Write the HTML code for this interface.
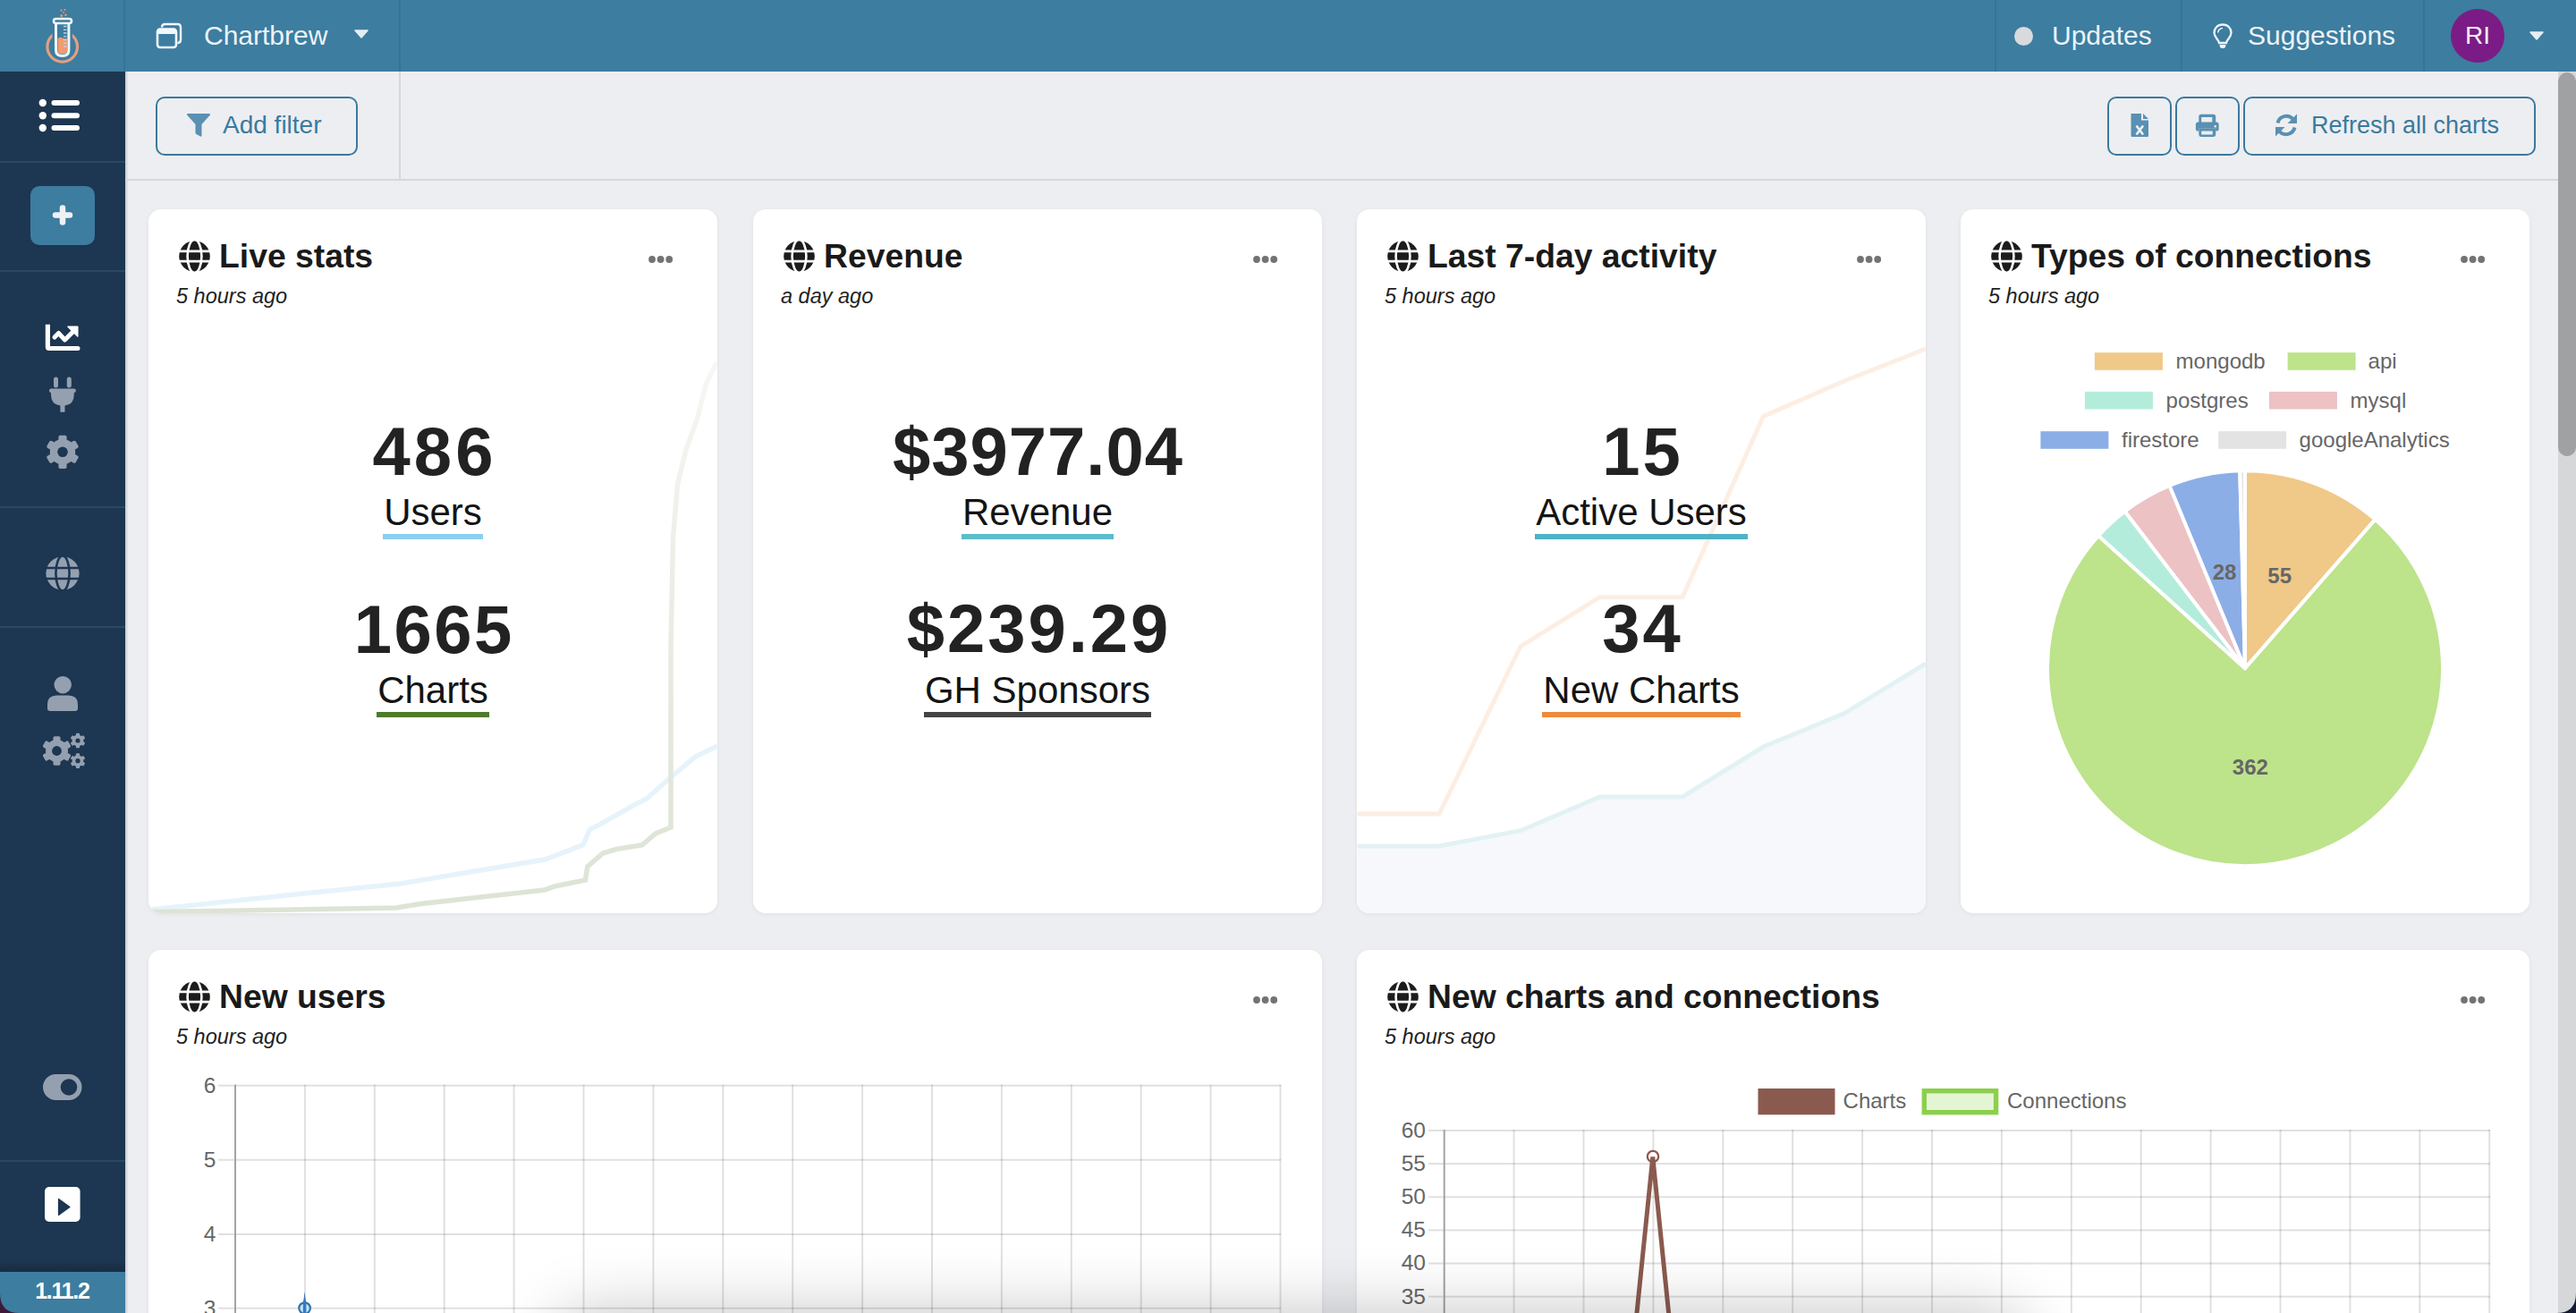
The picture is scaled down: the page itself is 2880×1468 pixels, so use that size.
<!DOCTYPE html>
<html><head><meta charset="utf-8">
<style>
*{margin:0;padding:0;box-sizing:border-box}
html,body{width:2880px;height:1468px;overflow:hidden;background:#edeef1;font-family:"Liberation Sans",sans-serif;color:#1e1e1e}
.a{position:absolute}
.t{position:absolute;white-space:nowrap;line-height:1}
#top{left:0;top:0;width:2880px;height:80px;background:#3c7da0}
.vd{position:absolute;top:0;width:2px;height:80px;background:#36739a}
#side{left:0;top:80px;width:140px;height:1388px;background:#1d3651}
.hd{position:absolute;left:0;width:140px;height:2px;background:#2a4864}
.btn{position:absolute;border:2px solid #3a7a9e;border-radius:10px}
.card{position:absolute;background:#fff;border-radius:14px;box-shadow:0 1px 5px rgba(0,0,0,0.06);overflow:hidden}
.title{font-weight:bold;font-size:36px;color:#1a1a1a}
.sub{font-style:italic;font-size:23.5px;color:#222}
.big{font-weight:bold;font-size:76px;color:#222;text-align:center}
.lbl{font-size:42px;color:#111;text-align:center}
.ul{position:absolute;height:6px}
.lg{font-size:24px;color:#666}
</style></head><body>
<!-- TOP BAR -->
<div id="top" class="a">
  <div class="vd" style="left:138px"></div>
  <div class="vd" style="left:446px"></div>
  <div class="vd" style="left:2230px"></div>
  <div class="vd" style="left:2438px"></div>
  <div class="vd" style="left:2709px"></div>
</div>

<!-- LOGO -->
<svg class="a" style="left:0;top:0" width="140" height="80" viewBox="0 0 140 80">
  <circle cx="69.7" cy="52.3" r="16.8" fill="none" stroke="#e29f80" stroke-width="3.2"/>
  <path d="M62.5 25.5 L62.5 56 Q62.5 62.5 69.7 62.5 Q76.9 62.5 76.9 56 L76.9 25.5" fill="#3c7da0" stroke="#3c7da0" stroke-width="8"/>
  <path d="M64.5 43 Q67 41 70 42.5 Q73 44 75 43 L75 56 Q75 60.5 69.7 60.5 Q64.5 60.5 64.5 56 Z" fill="#ee9c72"/>
  <path d="M62.5 25.5 L62.5 56 Q62.5 62.5 69.7 62.5 Q76.9 62.5 76.9 56 L76.9 25.5" fill="none" stroke="#eef6fb" stroke-width="3"/>
  <rect x="60" y="21" width="20" height="5" rx="2.5" fill="#3c7da0" stroke="#eef6fb" stroke-width="2.6"/>
  <path d="M71 29.5 h3.5 M71 33.3 h3.5 M71 37 h3.5 M71 40.8 h3.5 M71 44.5 h3.5 M71 48.3 h3.5 M71 52 h3.5" stroke="#b8d6e6" stroke-width="1.3"/>
  <circle cx="68.8" cy="17.5" r="1.5" fill="#e59a73"/><circle cx="73.5" cy="16.7" r="1.3" fill="#e59a73"/>
  <circle cx="68.5" cy="11.7" r="1.1" fill="#e59a73"/><circle cx="72.5" cy="11" r="1.1" fill="#e59a73"/><circle cx="71" cy="14" r="0.9" fill="#e59a73"/>
</svg>
<!-- window icon -->
<svg class="a" style="left:172px;top:23px" width="34" height="34" viewBox="0 0 34 34">
  <path d="M9 7.5 Q9 4 12.5 4 H26.5 Q30 4 30 7.5 V21.5 Q30 25 26.5 25" fill="none" stroke="#f3f8fb" stroke-width="2.4"/>
  <rect x="4" y="9.5" width="21" height="20.5" rx="3" fill="#3c7da0" stroke="#f3f8fb" stroke-width="2.6"/>
  <rect x="4" y="9.5" width="21" height="5.5" rx="2" fill="#f3f8fb"/>
</svg>
<div class="t" style="left:228px;top:24.5px;font-size:30px;color:#ecf3f8">Chartbrew</div>
<svg class="a" style="left:396px;top:33px" width="16" height="10" viewBox="0 0 16 10"><path d="M1 1 H15 L8 9 Z" fill="#e6eef3" stroke="#e6eef3" stroke-width="1.5" stroke-linejoin="round"/></svg>
<div class="a" style="left:2252px;top:29.5px;width:21px;height:21px;border-radius:50%;background:#d9dadb"></div>
<div class="t" style="left:2294px;top:24.6px;font-size:30px;color:#ecf3f8">Updates</div>
<svg class="a" style="left:2472px;top:25px" width="26" height="30" viewBox="0 0 26 30">
  <path d="M13 2.5 C7 2.5 3.5 7 3.5 11.5 C3.5 15 5.5 17 7 19 C8 20.5 8.7 21.5 9 23 H17 C17.3 21.5 18 20.5 19 19 C20.5 17 22.5 15 22.5 11.5 C22.5 7 19 2.5 13 2.5 Z" fill="none" stroke="#eef4f8" stroke-width="2.3"/>
  <path d="M9.5 25 H16.5 L16 27.5 Q15.5 29 13 29 Q10.5 29 10 27.5 Z" fill="#eef4f8"/>
  <path d="M13 6.5 C10 6.5 7.8 9 7.8 11.5" fill="none" stroke="#eef4f8" stroke-width="1.6"/>
</svg>
<div class="t" style="left:2513px;top:24.6px;font-size:30px;color:#ecf3f8">Suggestions</div>
<div class="a" style="left:2740px;top:10px;width:60px;height:60px;border-radius:50%;background:#7b1c86"></div>
<div class="t" style="left:2740px;top:26px;width:60px;text-align:center;font-size:28px;color:#f6eef8">RI</div>
<svg class="a" style="left:2828px;top:35px" width="16" height="10" viewBox="0 0 16 10"><path d="M1 1 H15 L8 9 Z" fill="#e6eef3" stroke="#e6eef3" stroke-width="1.5" stroke-linejoin="round"/></svg>

<!-- SIDEBAR -->
<div id="side" class="a">
  <div class="hd" style="top:100px"></div>
  <div class="hd" style="top:222px"></div>
  <div class="hd" style="top:486px"></div>
  <div class="hd" style="top:620px"></div>
  <div class="hd" style="top:1217px"></div>
</div>

<svg class="a" style="left:0;top:80px" width="140" height="1388" viewBox="0 80 140 1388">
  <g fill="#ffffff">
    <circle cx="47.8" cy="115" r="4.2"/><circle cx="47.8" cy="129.2" r="4.2"/><circle cx="47.8" cy="143" r="4.2"/>
    <rect x="57.5" y="112" width="31.5" height="6" rx="3"/><rect x="57.5" y="126.2" width="31.5" height="6" rx="3"/><rect x="57.5" y="140" width="31.5" height="6" rx="3"/>
  </g>
  <rect x="34" y="208" width="72" height="66" rx="10" fill="#3c7da0"/>
  <path d="M70 232.4 V248.4 M62 240.4 H78" stroke="#eef2f6" stroke-width="6.5" stroke-linecap="round"/>
  <!-- chart line -->
  <path d="M50.8 362.8 H56 V387 H87 Q89.5 387 89.5 389.5 Q89.5 392 87 392 H55 Q50.8 392 50.8 388 Z" fill="#fff"/>
  <path d="M61 377 L65.5 372.5 L72.5 380 L82 370.5" fill="none" stroke="#fff" stroke-width="5" stroke-linecap="round" stroke-linejoin="round"/>
  <path d="M76 365.3 H86.8 V376 Z" fill="#fff" stroke="#fff" stroke-width="1.5" stroke-linejoin="round"/>
  <g fill="#94a0af">
    <!-- plug -->
    <rect x="60" y="421.5" width="5" height="12" rx="2.5"/><rect x="74.8" y="421.5" width="5" height="12" rx="2.5"/>
    <rect x="55" y="434.5" width="29.8" height="4.5" rx="2"/>
    <path d="M57 438 H82.8 V441 Q82.8 452.5 72.5 453.5 V460.7 H67.4 V453.5 Q57 452.5 57 441 Z"/>
    <!-- gear -->
    <g transform="translate(70 505.3)"><circle r="14.2"/><rect x="-4.6" y="-18.6" width="9.2" height="10" rx="2" transform="rotate(0)"/><rect x="-4.6" y="-18.6" width="9.2" height="10" rx="2" transform="rotate(60)"/><rect x="-4.6" y="-18.6" width="9.2" height="10" rx="2" transform="rotate(120)"/><rect x="-4.6" y="-18.6" width="9.2" height="10" rx="2" transform="rotate(180)"/><rect x="-4.6" y="-18.6" width="9.2" height="10" rx="2" transform="rotate(240)"/><rect x="-4.6" y="-18.6" width="9.2" height="10" rx="2" transform="rotate(300)"/></g>
  </g>
  <circle cx="70" cy="505.3" r="5.8" fill="#1d3651"/>
  <!-- globe -->
  <g transform="translate(70 641)">
    <circle r="18.6" fill="#94a0af"/>
    <g stroke="#1d3651" stroke-width="2.6" fill="none">
      <ellipse rx="7.6" ry="19.5"/>
      <path d="M-20 -6 H20 M-20 6 H20"/>
    </g>
  </g>
  <g fill="#94a0af">
    <!-- user -->
    <circle cx="70.2" cy="765.7" r="9.7"/>
    <path d="M53 792 V788 Q53 777.6 64 777.6 H76 Q87 777.6 87 788 V792 Q87 795 84 795 H56 Q53 795 53 792 Z"/>
  </g>
  <!-- gears -->
  <g fill="#94a0af">
    <g transform="translate(63.5 839.5) scale(0.88)"><circle r="14.2"/><rect x="-4.6" y="-18.6" width="9.2" height="10" rx="2" transform="rotate(0)"/><rect x="-4.6" y="-18.6" width="9.2" height="10" rx="2" transform="rotate(60)"/><rect x="-4.6" y="-18.6" width="9.2" height="10" rx="2" transform="rotate(120)"/><rect x="-4.6" y="-18.6" width="9.2" height="10" rx="2" transform="rotate(180)"/><rect x="-4.6" y="-18.6" width="9.2" height="10" rx="2" transform="rotate(240)"/><rect x="-4.6" y="-18.6" width="9.2" height="10" rx="2" transform="rotate(300)"/></g>
    <g transform="translate(87 828) scale(0.45)"><circle r="14.2"/><rect x="-4.6" y="-18.6" width="9.2" height="10" rx="2" transform="rotate(0)"/><rect x="-4.6" y="-18.6" width="9.2" height="10" rx="2" transform="rotate(60)"/><rect x="-4.6" y="-18.6" width="9.2" height="10" rx="2" transform="rotate(120)"/><rect x="-4.6" y="-18.6" width="9.2" height="10" rx="2" transform="rotate(180)"/><rect x="-4.6" y="-18.6" width="9.2" height="10" rx="2" transform="rotate(240)"/><rect x="-4.6" y="-18.6" width="9.2" height="10" rx="2" transform="rotate(300)"/></g>
    <g transform="translate(87 850.7) scale(0.45)"><circle r="14.2"/><rect x="-4.6" y="-18.6" width="9.2" height="10" rx="2" transform="rotate(0)"/><rect x="-4.6" y="-18.6" width="9.2" height="10" rx="2" transform="rotate(60)"/><rect x="-4.6" y="-18.6" width="9.2" height="10" rx="2" transform="rotate(120)"/><rect x="-4.6" y="-18.6" width="9.2" height="10" rx="2" transform="rotate(180)"/><rect x="-4.6" y="-18.6" width="9.2" height="10" rx="2" transform="rotate(240)"/><rect x="-4.6" y="-18.6" width="9.2" height="10" rx="2" transform="rotate(300)"/></g>
  </g>
  <circle cx="63.5" cy="839.5" r="5.4" fill="#1d3651"/>
  <circle cx="87" cy="828" r="2.6" fill="#1d3651"/>
  <circle cx="87" cy="850.7" r="2.6" fill="#1d3651"/>
  <!-- toggle -->
  <rect x="48" y="1201" width="43.5" height="29" rx="14.5" fill="#94a0af"/>
  <circle cx="77" cy="1215.5" r="9.3" fill="#1d3651"/>
  <!-- play square -->
  <rect x="50" y="1327" width="39.6" height="39" rx="5" fill="#fff"/>
  <path d="M65.5 1340.5 L78 1349.5 L65.5 1358.5 Z" fill="#1d3651" stroke="#1d3651" stroke-width="1.2" stroke-linejoin="round"/>
</svg>
<div class="a" style="left:0;top:1408px;width:140px;height:14px;background:linear-gradient(rgba(0,0,0,0),rgba(0,0,0,0.18))"></div>
<div class="a" style="left:140px;top:80px;width:3px;height:1388px;background:linear-gradient(90deg,#c9ccd1,#e4e6ea)"></div>
<div class="a" style="left:0;top:1422px;width:140px;height:46px;background:#3c7da0"></div>
<div class="t" style="left:0;top:1431px;width:140px;text-align:center;color:#fff;font-weight:bold;font-size:25px;letter-spacing:-1.3px;text-indent:-1.3px">1.11.2</div>

<!-- FILTER BAR -->
<div class="a" style="left:446px;top:80px;width:2px;height:121px;background:#d6d7db"></div>
<div class="a" style="left:140px;top:200px;width:2720px;height:2px;background:#d6d7db"></div>
<div class="btn" style="left:174px;top:108px;width:226px;height:66px"></div>
<div class="t" style="left:249px;top:126.3px;font-size:28px;color:#3a7a9e">Add filter</div>
<div class="btn" style="left:2356px;top:108px;width:72px;height:66px"></div>
<div class="btn" style="left:2432px;top:108px;width:72px;height:66px"></div>
<div class="btn" style="left:2508px;top:108px;width:327px;height:66px"></div>
<div class="t" style="left:2584px;top:127px;font-size:27px;color:#3a7a9e">Refresh all charts</div>


<svg class="a" style="left:206px;top:125px" width="32" height="30" viewBox="0 0 32 30">
  <path d="M3 3.5 Q2.5 2 4 2 H28 Q29.5 2 29 3.5 L19.5 14 V26.5 Q19.5 28 18 27.5 L13.5 25 Q12.5 24.5 12.5 23 V14 Z" fill="#5a90b2"/>
</svg>
<svg class="a" style="left:2380px;top:125px" width="24" height="30" viewBox="0 0 24 30">
  <path d="M2.5 2 H14 V9.5 H22 V27 Q22 28 21 28 H3.5 Q2.5 28 2.5 27 Z" fill="#5a90b2"/>
  <path d="M16 2 L22 8 H16 Z" fill="#5a90b2"/>
  <path d="M8.5 15.5 L16 25.5 M16 15.5 L8.5 25.5" stroke="#eef0f3" stroke-width="2.6"/>
</svg>
<svg class="a" style="left:2453px;top:125px" width="30" height="30" viewBox="0 0 30 30">
  <path d="M5.3 13 V5.5 Q5.3 2.7 8 2.7 H21.5 Q24.2 2.7 24.2 5.5 V13 H20.3 V6 H8.2 V13 Z" fill="#5a90b2"/>
  <path d="M4.5 11.4 H25 Q27.6 11.4 27.6 14 V19 Q27.6 21.6 25 21.6 H24.2 V18.7 H5.3 V21.6 H4.5 Q1.9 21.6 1.9 19 V14 Q1.9 11.4 4.5 11.4 Z" fill="#5a90b2"/>
  <path d="M5.3 18.7 H24.2 V25.5 Q24.2 27.9 21.8 27.9 H7.7 Q5.3 27.9 5.3 25.5 Z M8.2 21.6 V25.5 H20.7 V21.6 Z" fill="#5a90b2" fill-rule="evenodd"/>
  <circle cx="23.7" cy="16.3" r="1.2" fill="#eef0f3"/>
</svg>
<svg class="a" style="left:2541px;top:125px" width="30" height="30" viewBox="0 0 30 30">
  <path d="M5.5 12.5 A10 10 0 0 1 22.5 8" fill="none" stroke="#5a90b2" stroke-width="4"/>
  <path d="M27 2.5 V13 H16.5 Z" fill="#5a90b2"/>
  <path d="M24.5 17.5 A10 10 0 0 1 7.5 22" fill="none" stroke="#5a90b2" stroke-width="4"/>
  <path d="M3 27.5 V17 H13.5 Z" fill="#5a90b2"/>
</svg>

<!-- SCROLLBAR -->
<div class="a" style="left:2860px;top:80px;width:20px;height:1388px;background:#d6d7d9"></div>
<div class="a" style="left:2860px;top:81px;width:20px;height:429px;background:#a0a1a3;border-radius:10px"></div>

<!-- CARDS -->
<div class="card" style="left:166px;top:234px;width:636px;height:787px"></div>
<div class="card" style="left:842px;top:234px;width:636px;height:787px"></div>
<div class="card" style="left:1517px;top:234px;width:636px;height:787px"></div>
<div class="card" style="left:2192px;top:234px;width:636px;height:787px"></div>
<div class="card" style="left:166px;top:1062px;width:1312px;height:500px"></div>
<div class="card" style="left:1517px;top:1062px;width:1311px;height:500px"></div>
<!-- CARDCONTENT -->
<svg class="a" style="left:166px;top:234px;clip-path:inset(0 round 14px)" width="636" height="787" viewBox="166 234 636 787">
<defs><linearGradient id="gfade" x1="0" y1="1021" x2="0" y2="400" gradientUnits="userSpaceOnUse"><stop offset="0" stop-color="#dde4d5"/><stop offset="0.16" stop-color="#dfe6d8"/><stop offset="0.5" stop-color="#e8ece3"/><stop offset="1" stop-color="#f7f7f5"/></linearGradient></defs>
<polyline points="169,1017 339.7,999 447.5,988 609,961 620,957 652,944.6 659.3,927.4 674,920 708.4,900.4 723,893 747.6,871 777,846.4 802,834" fill="none" stroke="#e6f3fb" stroke-width="5.5"/>
<polyline points="169,1019.6 443,1015 470,1010.6 609,995 620,991 654.4,984 656.8,969 674,954 688.7,949.5 718,944.6 733,932 750,925 750,723.6 752.5,601 757.5,542 767,502.7 779.5,468.4 789.4,429 801.6,404.5" fill="none" stroke="url(#gfade)" stroke-width="5.5"/>
</svg>
<svg class="a" style="left:1517px;top:234px;clip-path:inset(0 round 14px)" width="636" height="787" viewBox="1517 234 636 787">
<polygon points="1517.5,946 1609,946 1700,928.7 1788.5,891 1881,891 1971.4,835 2062,797.6 2153,742 2153,1021 1517.5,1021" fill="#f6f8fc"/>
<polyline points="1517.5,910 1609,910 1700,722.7 1788.5,667.7 1881,667.7 1971.4,465.4 2062,426 2153,390" fill="none" stroke="#fdeee3" stroke-width="5"/>
<polyline points="1517.5,946 1609,946 1700,928.7 1788.5,891 1881,891 1971.4,835 2062,797.6 2153,742" fill="none" stroke="#e2f2f4" stroke-width="5"/>
</svg>
<svg class="a" style="left:200px;top:269px" width="35" height="35" viewBox="-17.5 -17.5 35 35"><circle r="17.3" fill="#1c1c1c"/><g stroke="#fff" stroke-width="2.6" fill="none"><ellipse rx="7.9" ry="18.5"/><path d="M-19 -5.6 H19 M-19 5.6 H19"/></g></svg>
<div class="t" style="left:245px;top:268.4px;font-size:37.3px;font-weight:bold;color:#1a1a1a">Live stats</div>
<div class="t" style="left:197px;top:320.1px;font-size:23.5px;font-style:italic;color:#222">5 hours ago</div>
<svg class="a" style="left:722.8px;top:283.5px" width="32" height="12" viewBox="0 0 32 12"><g fill="#737373"><circle cx="6" cy="6" r="3.9"/><circle cx="15.6" cy="6" r="3.9"/><circle cx="25.2" cy="6" r="3.9"/></g></svg>
<svg class="a" style="left:876px;top:269px" width="35" height="35" viewBox="-17.5 -17.5 35 35"><circle r="17.3" fill="#1c1c1c"/><g stroke="#fff" stroke-width="2.6" fill="none"><ellipse rx="7.9" ry="18.5"/><path d="M-19 -5.6 H19 M-19 5.6 H19"/></g></svg>
<div class="t" style="left:921px;top:268.4px;font-size:37.3px;font-weight:bold;color:#1a1a1a">Revenue</div>
<div class="t" style="left:873px;top:320.1px;font-size:23.5px;font-style:italic;color:#222">a day ago</div>
<svg class="a" style="left:1398.8px;top:283.5px" width="32" height="12" viewBox="0 0 32 12"><g fill="#737373"><circle cx="6" cy="6" r="3.9"/><circle cx="15.6" cy="6" r="3.9"/><circle cx="25.2" cy="6" r="3.9"/></g></svg>
<svg class="a" style="left:1551px;top:269px" width="35" height="35" viewBox="-17.5 -17.5 35 35"><circle r="17.3" fill="#1c1c1c"/><g stroke="#fff" stroke-width="2.6" fill="none"><ellipse rx="7.9" ry="18.5"/><path d="M-19 -5.6 H19 M-19 5.6 H19"/></g></svg>
<div class="t" style="left:1596px;top:268.4px;font-size:37.3px;font-weight:bold;color:#1a1a1a">Last 7-day activity</div>
<div class="t" style="left:1548px;top:320.1px;font-size:23.5px;font-style:italic;color:#222">5 hours ago</div>
<svg class="a" style="left:2073.8px;top:283.5px" width="32" height="12" viewBox="0 0 32 12"><g fill="#737373"><circle cx="6" cy="6" r="3.9"/><circle cx="15.6" cy="6" r="3.9"/><circle cx="25.2" cy="6" r="3.9"/></g></svg>
<svg class="a" style="left:2226px;top:269px" width="35" height="35" viewBox="-17.5 -17.5 35 35"><circle r="17.3" fill="#1c1c1c"/><g stroke="#fff" stroke-width="2.6" fill="none"><ellipse rx="7.9" ry="18.5"/><path d="M-19 -5.6 H19 M-19 5.6 H19"/></g></svg>
<div class="t" style="left:2271px;top:268.4px;font-size:37.3px;font-weight:bold;color:#1a1a1a">Types of connections</div>
<div class="t" style="left:2223px;top:320.1px;font-size:23.5px;font-style:italic;color:#222">5 hours ago</div>
<svg class="a" style="left:2748.8px;top:283.5px" width="32" height="12" viewBox="0 0 32 12"><g fill="#737373"><circle cx="6" cy="6" r="3.9"/><circle cx="15.6" cy="6" r="3.9"/><circle cx="25.2" cy="6" r="3.9"/></g></svg>
<svg class="a" style="left:200px;top:1097px" width="35" height="35" viewBox="-17.5 -17.5 35 35"><circle r="17.3" fill="#1c1c1c"/><g stroke="#fff" stroke-width="2.6" fill="none"><ellipse rx="7.9" ry="18.5"/><path d="M-19 -5.6 H19 M-19 5.6 H19"/></g></svg>
<div class="t" style="left:245px;top:1096.4px;font-size:37.3px;font-weight:bold;color:#1a1a1a">New users</div>
<div class="t" style="left:197px;top:1148.1px;font-size:23.5px;font-style:italic;color:#222">5 hours ago</div>
<svg class="a" style="left:1398.8px;top:1111.5px" width="32" height="12" viewBox="0 0 32 12"><g fill="#737373"><circle cx="6" cy="6" r="3.9"/><circle cx="15.6" cy="6" r="3.9"/><circle cx="25.2" cy="6" r="3.9"/></g></svg>
<svg class="a" style="left:1551px;top:1097px" width="35" height="35" viewBox="-17.5 -17.5 35 35"><circle r="17.3" fill="#1c1c1c"/><g stroke="#fff" stroke-width="2.6" fill="none"><ellipse rx="7.9" ry="18.5"/><path d="M-19 -5.6 H19 M-19 5.6 H19"/></g></svg>
<div class="t" style="left:1596px;top:1096.4px;font-size:37.3px;font-weight:bold;color:#1a1a1a">New charts and connections</div>
<div class="t" style="left:1548px;top:1148.1px;font-size:23.5px;font-style:italic;color:#222">5 hours ago</div>
<svg class="a" style="left:2748.8px;top:1111.5px" width="32" height="12" viewBox="0 0 32 12"><g fill="#737373"><circle cx="6" cy="6" r="3.9"/><circle cx="15.6" cy="6" r="3.9"/><circle cx="25.2" cy="6" r="3.9"/></g></svg>
<div class="t" style="left:184px;top:466.7px;font-size:76px;width:600px;text-align:center;font-weight:bold;color:#222;letter-spacing:4px;text-indent:4px">486</div>
<div class="a" style="left:184px;top:552.4px;width:600px;text-align:center;line-height:1"><span style="display:inline-block;position:relative;font-size:42px;color:#141414;white-space:nowrap">Users<span style="position:absolute;left:-1px;right:-1px;top:44.6px;height:6px;background:#8ccff0"></span></span></div>
<div class="t" style="left:184px;top:665.7px;font-size:76px;width:600px;text-align:center;font-weight:bold;color:#222;letter-spacing:2.5px;text-indent:2.5px">1665</div>
<div class="a" style="left:184px;top:751.4px;width:600px;text-align:center;line-height:1"><span style="display:inline-block;position:relative;font-size:42px;color:#141414;white-space:nowrap">Charts<span style="position:absolute;left:-1px;right:-1px;top:44.6px;height:6px;background:#4f7a2a"></span></span></div>
<div class="t" style="left:860px;top:466.7px;font-size:76px;width:600px;text-align:center;font-weight:bold;color:#222;letter-spacing:1px;text-indent:1px">$3977.04</div>
<div class="a" style="left:860px;top:552.4px;width:600px;text-align:center;line-height:1"><span style="display:inline-block;position:relative;font-size:42px;color:#141414;white-space:nowrap">Revenue<span style="position:absolute;left:-1px;right:-1px;top:44.6px;height:6px;background:#5bbccc"></span></span></div>
<div class="t" style="left:860px;top:664.7px;font-size:76px;width:600px;text-align:center;font-weight:bold;color:#222;letter-spacing:3px;text-indent:3px">$239.29</div>
<div class="a" style="left:860px;top:751.4px;width:600px;text-align:center;line-height:1"><span style="display:inline-block;position:relative;font-size:42px;color:#141414;white-space:nowrap">GH Sponsors<span style="position:absolute;left:-1px;right:-1px;top:44.6px;height:6px;background:#444444"></span></span></div>
<div class="t" style="left:1535px;top:466.7px;font-size:76px;width:600px;text-align:center;font-weight:bold;color:#222;letter-spacing:3px;text-indent:3px">15</div>
<div class="a" style="left:1535px;top:552.4px;width:600px;text-align:center;line-height:1"><span style="display:inline-block;position:relative;font-size:42px;color:#141414;white-space:nowrap">Active Users<span style="position:absolute;left:-1px;right:-1px;top:44.6px;height:6px;background:#4fb2c6"></span></span></div>
<div class="t" style="left:1535px;top:664.7px;font-size:76px;width:600px;text-align:center;font-weight:bold;color:#222;letter-spacing:3px;text-indent:3px">34</div>
<div class="a" style="left:1535px;top:751.4px;width:600px;text-align:center;line-height:1"><span style="display:inline-block;position:relative;font-size:42px;color:#141414;white-space:nowrap">New Charts<span style="position:absolute;left:-1px;right:-1px;top:44.6px;height:6px;background:#ee8a3c"></span></span></div>
<svg class="a" style="left:2192px;top:234px" width="636" height="787" viewBox="2192 234 636 787"><path d="M2510,747.2 L2510.00,526.20 A221,221 0 0 1 2655.47,580.83 Z" fill="#f0c888" stroke="#fff" stroke-width="4" stroke-linejoin="round"/><path d="M2510,747.2 L2655.47,580.83 A221,221 0 1 1 2346.02,599.04 Z" fill="#bde38b" stroke="#fff" stroke-width="4" stroke-linejoin="round"/><path d="M2510,747.2 L2346.02,599.04 A221,221 0 0 1 2375.70,571.69 Z" fill="#b4ecdc" stroke="#fff" stroke-width="4" stroke-linejoin="round"/><path d="M2510,747.2 L2375.70,571.69 A221,221 0 0 1 2425.59,542.95 Z" fill="#ecc2c5" stroke="#fff" stroke-width="4" stroke-linejoin="round"/><path d="M2510,747.2 L2425.59,542.95 A221,221 0 0 1 2504.23,526.28 Z" fill="#8caee6" stroke="#fff" stroke-width="4" stroke-linejoin="round"/><path d="M2510,747.2 L2504.23,526.28 A221,221 0 0 1 2510.00,526.20 Z" fill="#e3e3e3" stroke="#fff" stroke-width="4" stroke-linejoin="round"/><rect x="2341.9" y="394.2" width="76" height="19.6" fill="#f0c888"/><rect x="2557.6" y="394.2" width="76" height="19.6" fill="#bde38b"/><rect x="2330.9" y="437.9" width="76" height="19.6" fill="#b4ecdc"/><rect x="2536.9" y="437.9" width="76" height="19.6" fill="#ecc2c5"/><rect x="2281.4" y="482.2" width="76" height="19.6" fill="#8caee6"/><rect x="2480.2" y="482.2" width="76" height="19.6" fill="#e3e3e3"/></svg>
<div class="t" style="left:2432.6px;top:391.7px;font-size:24px;color:#666">mongodb</div>
<div class="t" style="left:2647.6px;top:391.7px;font-size:24px;color:#666">api</div>
<div class="t" style="left:2421.6px;top:435.7px;font-size:24px;color:#666">postgres</div>
<div class="t" style="left:2627.6px;top:435.7px;font-size:24px;color:#666">mysql</div>
<div class="t" style="left:2372px;top:479.7px;font-size:24px;color:#666">firestore</div>
<div class="t" style="left:2570.6px;top:479.7px;font-size:24px;color:#666">googleAnalytics</div>
<div class="t" style="left:2448.7px;top:631.7px;font-size:24px;width:200px;text-align:center;font-weight:bold;color:#666">55</div>
<div class="t" style="left:2387px;top:627.5px;font-size:24px;width:200px;text-align:center;font-weight:bold;color:#666">28</div>
<div class="t" style="left:2415.85px;top:845.7px;font-size:24px;width:200px;text-align:center;font-weight:bold;color:#666">362</div>
<svg class="a" style="left:166px;top:1062px" width="1312" height="406" viewBox="166 1062 1312 406"><rect x="244" y="1212.7" width="1188" height="2" fill="rgba(0,0,0,0.12)"/><rect x="244" y="1295.8" width="1188" height="2" fill="rgba(0,0,0,0.12)"/><rect x="244" y="1379.0" width="1188" height="2" fill="rgba(0,0,0,0.12)"/><rect x="244" y="1461.7" width="1188" height="2" fill="rgba(0,0,0,0.12)"/><rect x="339.9" y="1212.7" width="2" height="260" fill="rgba(0,0,0,0.12)"/><rect x="417.8" y="1212.7" width="2" height="260" fill="rgba(0,0,0,0.12)"/><rect x="495.7" y="1212.7" width="2" height="260" fill="rgba(0,0,0,0.12)"/><rect x="573.6" y="1212.7" width="2" height="260" fill="rgba(0,0,0,0.12)"/><rect x="651.5" y="1212.7" width="2" height="260" fill="rgba(0,0,0,0.12)"/><rect x="729.4" y="1212.7" width="2" height="260" fill="rgba(0,0,0,0.12)"/><rect x="807.3" y="1212.7" width="2" height="260" fill="rgba(0,0,0,0.12)"/><rect x="885.2" y="1212.7" width="2" height="260" fill="rgba(0,0,0,0.12)"/><rect x="963.1" y="1212.7" width="2" height="260" fill="rgba(0,0,0,0.12)"/><rect x="1041.0" y="1212.7" width="2" height="260" fill="rgba(0,0,0,0.12)"/><rect x="1118.9" y="1212.7" width="2" height="260" fill="rgba(0,0,0,0.12)"/><rect x="1196.8" y="1212.7" width="2" height="260" fill="rgba(0,0,0,0.12)"/><rect x="1274.7" y="1212.7" width="2" height="260" fill="rgba(0,0,0,0.12)"/><rect x="1352.6" y="1212.7" width="2" height="260" fill="rgba(0,0,0,0.12)"/><rect x="1430.5" y="1212.7" width="2" height="260" fill="rgba(0,0,0,0.12)"/><rect x="262" y="1212.7" width="2" height="260" fill="#a3a3a3"/><path d="M338.6 1462 L340.6 1444 L342.6 1462 Z" fill="#3571b0"/><circle cx="340.6" cy="1462.6" r="6.3" fill="#bfe6fb" stroke="#3571b0" stroke-width="2.2"/><path d="M338.8 1456 L340.6 1450 L342.4 1456 L342.4 1468 L338.8 1468 Z" fill="#3a7bbd"/></svg>
<div class="t" style="left:141.5px;top:1201.7px;font-size:24.5px;width:100px;text-align:right;color:#666">6</div>
<div class="t" style="left:141.5px;top:1284.8px;font-size:24.5px;width:100px;text-align:right;color:#666">5</div>
<div class="t" style="left:141.5px;top:1368.0px;font-size:24.5px;width:100px;text-align:right;color:#666">4</div>
<div class="t" style="left:141.5px;top:1450.7px;font-size:24.5px;width:100px;text-align:right;color:#666">3</div>
<svg class="a" style="left:1517px;top:1062px" width="1311" height="406" viewBox="1517 1062 1311 406"><rect x="1597" y="1263.0" width="1187" height="2" fill="rgba(0,0,0,0.12)"/><rect x="1597" y="1300.1" width="1187" height="2" fill="rgba(0,0,0,0.12)"/><rect x="1597" y="1337.3" width="1187" height="2" fill="rgba(0,0,0,0.12)"/><rect x="1597" y="1374.4" width="1187" height="2" fill="rgba(0,0,0,0.12)"/><rect x="1597" y="1411.6" width="1187" height="2" fill="rgba(0,0,0,0.12)"/><rect x="1597" y="1448.7" width="1187" height="2" fill="rgba(0,0,0,0.12)"/><rect x="1691.6" y="1263" width="2" height="210" fill="rgba(0,0,0,0.12)"/><rect x="1769.5" y="1263" width="2" height="210" fill="rgba(0,0,0,0.12)"/><rect x="1847.4" y="1263" width="2" height="210" fill="rgba(0,0,0,0.12)"/><rect x="1925.3" y="1263" width="2" height="210" fill="rgba(0,0,0,0.12)"/><rect x="2003.2" y="1263" width="2" height="210" fill="rgba(0,0,0,0.12)"/><rect x="2081.1" y="1263" width="2" height="210" fill="rgba(0,0,0,0.12)"/><rect x="2159.0" y="1263" width="2" height="210" fill="rgba(0,0,0,0.12)"/><rect x="2236.9" y="1263" width="2" height="210" fill="rgba(0,0,0,0.12)"/><rect x="2314.8" y="1263" width="2" height="210" fill="rgba(0,0,0,0.12)"/><rect x="2392.7" y="1263" width="2" height="210" fill="rgba(0,0,0,0.12)"/><rect x="2470.6" y="1263" width="2" height="210" fill="rgba(0,0,0,0.12)"/><rect x="2548.5" y="1263" width="2" height="210" fill="rgba(0,0,0,0.12)"/><rect x="2626.4" y="1263" width="2" height="210" fill="rgba(0,0,0,0.12)"/><rect x="2704.3" y="1263" width="2" height="210" fill="rgba(0,0,0,0.12)"/><rect x="2782.2" y="1263" width="2" height="210" fill="rgba(0,0,0,0.12)"/><rect x="1613.7" y="1263" width="2" height="210" fill="#a3a3a3"/><circle cx="1848" cy="1293" r="6.2" fill="#fff" stroke="#8b5a4f" stroke-width="2.2"/><polyline points="1820.6,1560 1847.8,1293.6 1875,1560" fill="none" stroke="#8b5a4f" stroke-width="5" stroke-linejoin="bevel"/><rect x="1965.5" y="1217" width="86" height="29.3" fill="#8b5a4f"/><rect x="2151.3" y="1219.7" width="80.3" height="24" fill="#e4f5d6" stroke="#8ccf4d" stroke-width="5.4"/></svg>
<div class="t" style="left:2060.6px;top:1219.2px;font-size:24px;color:#666">Charts</div>
<div class="t" style="left:2244px;top:1219.2px;font-size:24px;color:#666">Connections</div>
<div class="t" style="left:1494px;top:1251.9px;font-size:24.5px;width:100px;text-align:right;color:#666">60</div>
<div class="t" style="left:1494px;top:1289.0px;font-size:24.5px;width:100px;text-align:right;color:#666">55</div>
<div class="t" style="left:1494px;top:1326.1px;font-size:24.5px;width:100px;text-align:right;color:#666">50</div>
<div class="t" style="left:1494px;top:1363.3px;font-size:24.5px;width:100px;text-align:right;color:#666">45</div>
<div class="t" style="left:1494px;top:1400.4px;font-size:24.5px;width:100px;text-align:right;color:#666">40</div>
<div class="t" style="left:1494px;top:1437.6px;font-size:24.5px;width:100px;text-align:right;color:#666">35</div>
<div class="a" style="left:640px;top:1490px;width:1605px;height:60px;border-radius:30px;box-shadow:0 0 70px 25px rgba(0,0,0,0.22)"></div>
<svg class="a" style="left:0;top:1446px" width="22" height="22" viewBox="0 0 22 22"><path d="M0 0 Q0 22 22 22 H0 Z" fill="#3e1a38"/></svg>
<svg class="a" style="left:2858px;top:1446px" width="22" height="22" viewBox="0 0 22 22"><path d="M22 0 Q22 22 0 22 H22 Z" fill="#151a33"/></svg>
<!-- /CARDCONTENT -->
</body></html>
